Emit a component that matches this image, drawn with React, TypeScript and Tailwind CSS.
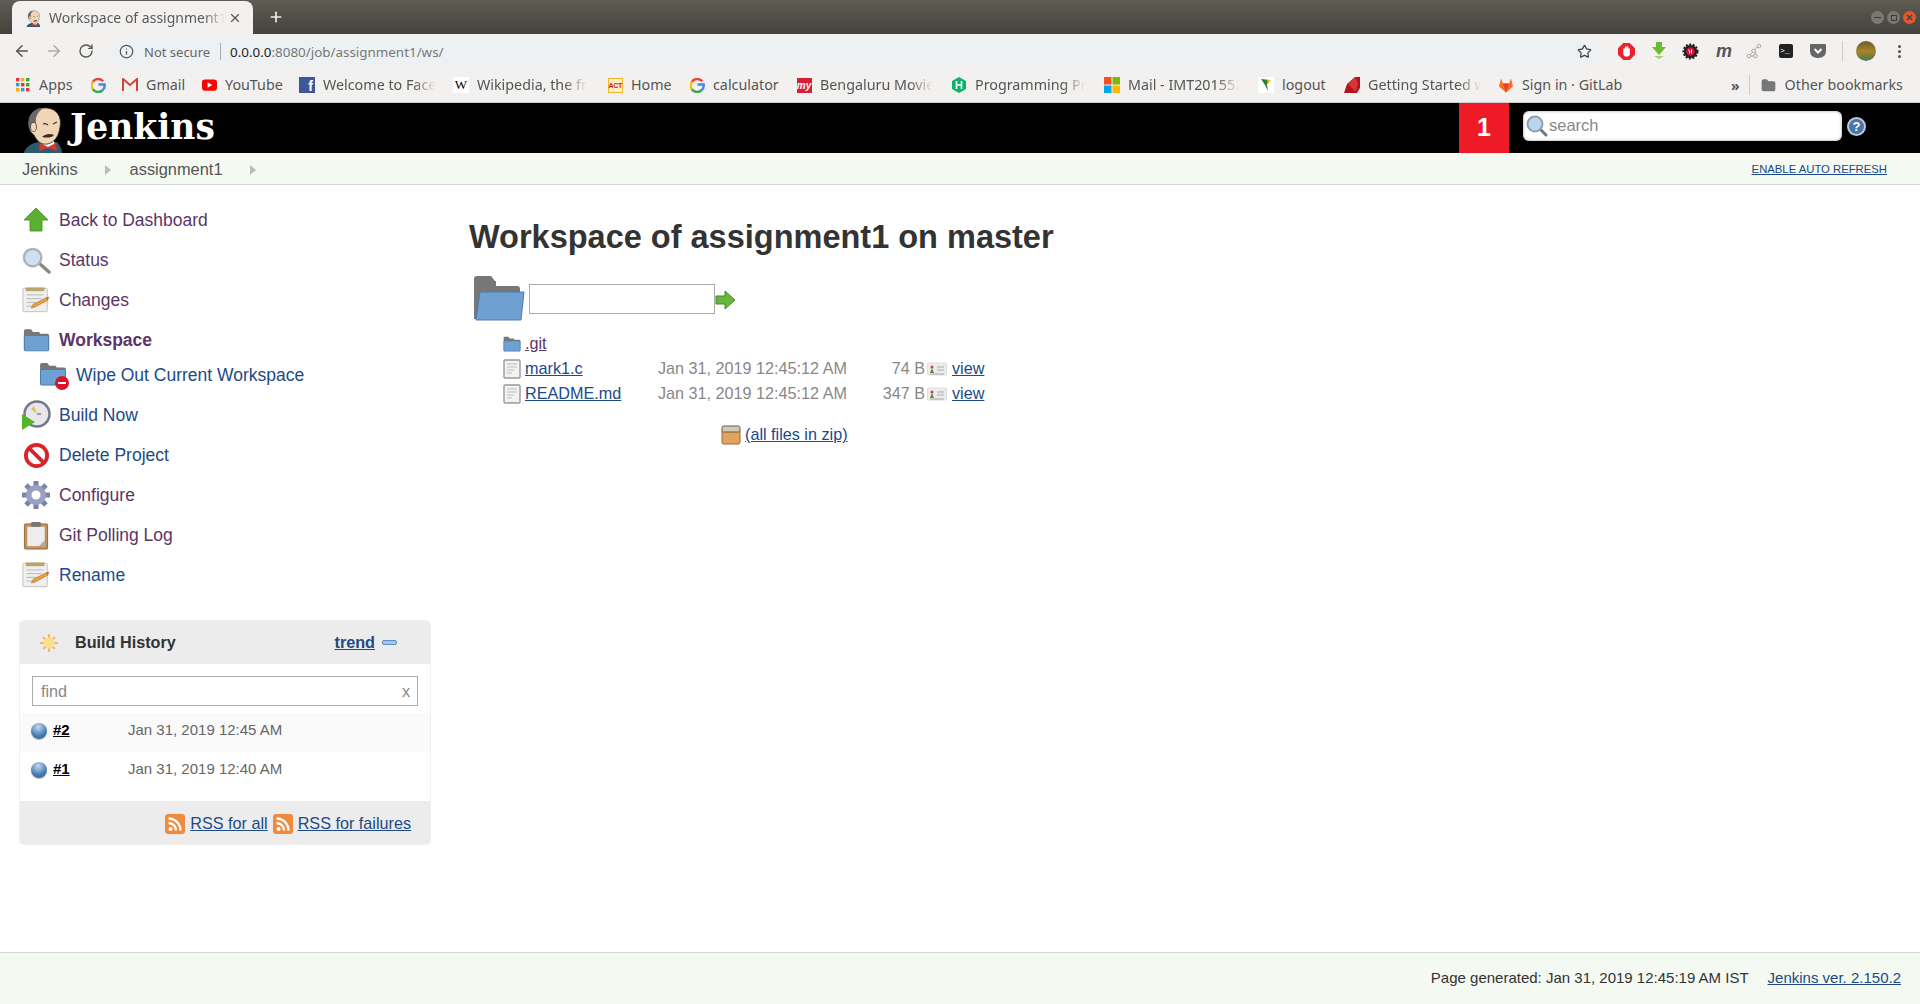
import { ArrowLeft, ArrowRight, RotateCw, Info, Star, X, Plus, Folder } from 'lucide-react'
import { ReactNode } from 'react'

const CHROME_FONT = 'font-["Noto_Sans",sans-serif]'

function Jenkins({ className }: { className: string }) {
  return (
    <svg viewBox="5 0 50 50" className={className}>
      <path d="M9 50c1-6 8-10 15-11h18c3 3 5 7 5 11z" fill="#2f5a6e" />
      <path d="M27 38l12 0 1 5-6 2-6-2z" fill="#f4f1ea" />
      <path d="M33 44l-8-4-1 8 9-3 9 3-1-8z" fill="#d33833" />
      <path d="M14 22C13 10 22 4 32 5c10 1 15 9 13 19-1 8-5 16-13 17-6 1-10-3-13-9-3-2-5-5-5-10z" fill="#f0d6b7" stroke="#3c2f26" strokeWidth=".8" />
      <path d="M14 25C11 12 20 4 29 5c-6 3-9 9-8 15l-3 6z" fill="#6a686a" />
      <ellipse cx="18.5" cy="24" rx="3" ry="4.5" fill="#f0d6b7" stroke="#3c2f26" strokeWidth=".7" />
      <path d="M27 34c3-3 8-4 12-2-2 3-8 3-12 2z" fill="#3c2f26" />
      <path d="M28 21c2-1 4 0 5 1M38 21l4-2" stroke="#3c2f26" strokeWidth="1.2" fill="none" />
    </svg>
  )
}

function Notepad() {
  return (
    <svg viewBox="0 0 30 28" className="w-[28px] h-[27px]">
      <rect x="1" y="1" width="26" height="25" rx="1" fill="#efefef" stroke="#bdbdbd" />
      <rect x="4" y="0" width="20" height="4" fill="#b7a66a" />
      <path d="M5 8h18M5 12h16M5 16h10M5 20h8" stroke="#b5b5b5" strokeWidth="1" />
      <path d="M10 22l2-4 14-7 2 2.5-14 7.5z" fill="#e8a13a" stroke="#a86b1d" strokeWidth=".6" />
      <path d="M26 11l3-1-1 3z" fill="#d33" />
    </svg>
  )
}

function FolderIcon({ className }: { className: string }) {
  return (
    <svg viewBox="0 0 30 26" className={className}>
      <path d="M1 3q0-2 2-2h6l2 3h7l1 2h8q2 0 2 2v16H1z" fill="#777" />
      <rect x="1.5" y="8" width="27" height="17" rx="1" fill="#6fa0d2" stroke="#4a7cb3" />
    </svg>
  )
}

function SidebarIcon({ name }: { name: string }) {
  if (name === 'up')
    return (
      <svg viewBox="0 0 28 26" className="w-[28px] h-[26px]">
        <path d="M14 1L26 13h-6v11H8V13H2z" fill="#5cb030" stroke="#3f8a1e" strokeWidth=".8" />
      </svg>
    )
  if (name === 'search')
    return (
      <svg viewBox="0 0 30 28" className="w-[29px] h-[27px]">
        <path d="M18 17l10 9" stroke="#888" strokeWidth="3.5" strokeLinecap="round" />
        <circle cx="11" cy="11" r="9" fill="#cfe0f2" stroke="#aab2ba" strokeWidth="2.5" />
      </svg>
    )
  if (name === 'notepad') return <Notepad />
  if (name === 'folder') return <FolderIcon className="w-[27px] h-[24px]" />
  if (name === 'clock')
    return (
      <svg viewBox="0 0 30 30" className="w-[30px] h-[30px]">
        <circle cx="16" cy="14" r="12.5" fill="#e8e8ec" stroke="#76768a" strokeWidth="2.5" />
        <path d="M16 14l-6-5 3-3z" fill="#e3c44e" />
        <path d="M16 14l4 0" stroke="#555" strokeWidth="1" />
        <path d="M1 14l13 8-13 8z" fill="#55b52a" />
      </svg>
    )
  if (name === 'nope')
    return (
      <svg viewBox="0 0 28 28" className="w-[27px] h-[27px]">
        <circle cx="14" cy="14" r="11" fill="#fff" stroke="#d8242a" strokeWidth="4" />
        <path d="M6 6l16 16" stroke="#d8242a" strokeWidth="4" />
      </svg>
    )
  if (name === 'gear')
    return (
      <svg viewBox="0 0 30 30" className="w-[30px] h-[30px]">
        <g stroke="#7c82a8" strokeWidth="5">
          <path d="M15 1v28M1 15h28M5 5l20 20M25 5L5 25" />
        </g>
        <circle cx="15" cy="15" r="10" fill="#9a9fc4" />
        <circle cx="15" cy="15" r="4.5" fill="#fff" />
      </svg>
    )
  return (
    <svg viewBox="0 0 26 30" className="w-[26px] h-[29px]">
      <rect x="1" y="3" width="24" height="26" rx="1" fill="#c0935c" stroke="#94693a" />
      <rect x="4" y="6" width="18" height="20" fill="#ededed" />
      <rect x="8" y="1" width="10" height="5" rx="1" fill="#777" />
      <path d="M16 26l6-6v6z" fill="#aaa" />
    </svg>
  )
}

function MiniDoc() {
  return (
    <svg viewBox="0 0 18 20" className="w-[18px] h-[20px] shrink-0">
      <rect x="1" y="1" width="16" height="18" rx="1" fill="#f2f2f2" stroke="#999" strokeWidth="1.4" />
      <path d="M4 5h10M4 8h10M4 11h7M4 14h5" stroke="#bbb" />
    </svg>
  )
}

function ViewIcon() {
  return (
    <svg viewBox="0 0 20 14" className="w-[20px] h-[14px] shrink-0">
      <rect x=".5" y="1" width="19" height="12" rx="1" fill="#ececec" stroke="#ddd" />
      <path d="M3 11l2-5 2 5z" fill="#7c7a3a" />
      <circle cx="5" cy="5" r="1.5" fill="#b5522b" />
      <path d="M10 5h7M10 8h7M3 12h14" stroke="#aaa" />
    </svg>
  )
}

function Ball() {
  return <span className="w-[16px] h-[16px] rounded-full bg-[radial-gradient(circle_at_45%_25%,#c5d9ec,#4d82b8_55%,#24527f)] shadow-[0_1px_1px_#bbb] shrink-0" />
}

function Rss() {
  return (
    <svg viewBox="0 0 20 20" className="w-[20px] h-[20px] shrink-0">
      <rect width="20" height="20" rx="3" fill="#f08a3c" />
      <circle cx="5.5" cy="15" r="2" fill="#fff" />
      <path d="M3.5 9a7.5 7.5 0 0 1 7.5 7.5M3.5 4.5a12 12 0 0 1 12 12" stroke="#fff" strokeWidth="2.4" fill="none" />
    </svg>
  )
}

function GoogleG() {
  return (
    <svg viewBox="0 0 16 16" className="w-[15px] h-[15px]">
      <path d="M13 3.5A7 7 0 0 0 2 4" fill="none" stroke="#ea4335" strokeWidth="2.6" />
      <path d="M2 4a7 7 0 0 0 0 8" fill="none" stroke="#fbbc05" strokeWidth="2.6" />
      <path d="M2 12a7 7 0 0 0 10 1.4" fill="none" stroke="#34a853" strokeWidth="2.6" />
      <path d="M12 13.4A7 7 0 0 0 14.6 7H8" fill="none" stroke="#4285f4" strokeWidth="2.6" />
    </svg>
  )
}

const bookmarks: { w: string; label?: string; fade?: boolean; icon: ReactNode; tw?: string }[] = [
  {
    w: 'w-[75px]',
    label: 'Apps',
    icon: (
      <svg viewBox="0 0 14 14" className="w-[14px] h-[14px]">
        {['#e33', '#fa0', '#3a3', '#39e', '#e33', '#3a3', '#fa0', '#39e', '#e33'].map((c, i) => (
          <rect key={i} x={(i % 3) * 5} y={Math.floor(i / 3) * 5} width="3.4" height="3.4" fill={c} />
        ))}
      </svg>
    ),
  },
  { w: 'w-[32px]', icon: <GoogleG /> },
  {
    w: 'w-[79px]',
    label: 'Gmail',
    icon: (
      <svg viewBox="0 0 16 14" className="w-[16px] h-[14px]">
        <path d="M1 13V1l7 6 7-6v12" fill="none" stroke="#d0453a" strokeWidth="2" />
      </svg>
    ),
  },
  {
    w: 'w-[98px]',
    label: 'YouTube',
    icon: (
      <svg viewBox="0 0 16 12" className="w-[15px] h-[12px]">
        <rect width="16" height="12" rx="3" fill="#f00" />
        <path d="M6 3l5 3-5 3z" fill="#fff" />
      </svg>
    ),
  },
  {
    w: 'w-[154px]',
    label: 'Welcome to Face',
    fade: true,
    tw: 'w-[113px]',
    icon: (
      <span className="w-[16px] h-[16px] bg-[#3b5998] text-white font-bold text-[14px] leading-[18px] flex justify-end pr-[2px] font-['Liberation_Sans',sans-serif]">f</span>
    ),
  },
  {
    w: 'w-[154px]',
    label: 'Wikipedia, the fr',
    fade: true,
    tw: 'w-[110px]',
    icon: <span className="w-[16px] h-[16px] bg-white text-black text-[13px] leading-[16px] text-center font-['Liberation_Serif',serif]">W</span>,
  },
  {
    w: 'w-[82px]',
    label: 'Home',
    icon: <span className="w-[15px] h-[15px] bg-[#fdf0c0] border border-[#f0b429] text-[#d2142a] font-bold text-[7px] leading-[13px] text-center tracking-tighter font-['Liberation_Sans',sans-serif]">ACT</span>,
  },
  { w: 'w-[107px]', label: 'calculator', icon: <GoogleG /> },
  {
    w: 'w-[155px]',
    label: 'Bengaluru Movie',
    fade: true,
    tw: 'w-[113px]',
    icon: <span className="w-[15px] h-[15px] bg-[#d81e34] text-white italic font-bold text-[10px] leading-[15px] text-center font-['Liberation_Sans',sans-serif]">my</span>,
  },
  {
    w: 'w-[153px]',
    label: 'Programming Pr',
    fade: true,
    tw: 'w-[110px]',
    icon: (
      <svg viewBox="0 0 14 16" className="w-[14px] h-[16px]">
        <path d="M7 0l7 4v8l-7 4-7-4V4z" fill="#0cb46b" />
        <path d="M4.5 4v8M9.5 4v8M4.5 8h5" stroke="#fff" strokeWidth="1.6" />
      </svg>
    ),
  },
  {
    w: 'w-[154px]',
    label: 'Mail - IMT201552',
    fade: true,
    tw: 'w-[111px]',
    icon: (
      <svg viewBox="0 0 16 16" className="w-[16px] h-[16px]">
        <rect width="7.5" height="7.5" fill="#f25022" />
        <rect x="8.5" width="7.5" height="7.5" fill="#7fba00" />
        <rect y="8.5" width="7.5" height="7.5" fill="#00a4ef" />
        <rect x="8.5" y="8.5" width="7.5" height="7.5" fill="#ffb900" />
      </svg>
    ),
  },
  {
    w: 'w-[86px]',
    label: 'logout',
    icon: (
      <svg viewBox="0 0 16 16" className="w-[16px] h-[16px]">
        <rect width="16" height="16" fill="#fff" />
        <path d="M3 2l9 1-3 4 1 7-3-6z" fill="#2f7d32" />
        <path d="M9 3l4 0-3 4z" fill="#e8c21e" />
      </svg>
    ),
  },
  {
    w: 'w-[154px]',
    label: 'Getting Started w',
    fade: true,
    tw: 'w-[113px]',
    icon: (
      <svg viewBox="0 0 16 16" className="w-[16px] h-[16px]">
        <path d="M11 0h5v11l-3 5H0l3-9z" fill="#b3141c" />
        <path d="M11 0L4 7l8 8 2-9z" fill="#d9343a" />
      </svg>
    ),
  },
  {
    w: 'w-[233px]',
    label: 'Sign in · GitLab',
    icon: (
      <svg viewBox="0 0 16 15" className="w-[17px] h-[16px]">
        <path d="M8 15L1 9l2-8 2 5h6l2-5 2 8z" fill="#fc6d26" />
        <path d="M8 15L5 6h6z" fill="#e24329" />
      </svg>
    ),
  },
]

function BrowserChrome() {
  return (
    <div className={`${CHROME_FONT} text-[#5a5a5a] shrink-0`}>
      {/* tab strip */}
      <div className="h-[34px] bg-gradient-to-b from-[#5f5c54] to-[#44423c] flex items-end pl-[12px]">
        <div className="w-[241px] h-[33px] bg-[#f2f1f0] rounded-t-[8px] flex items-center pl-[13px] pr-[10px]">
          <Jenkins className="w-[18px] h-[18px] shrink-0" />
          <span className="ml-[6px] w-[176px] overflow-hidden whitespace-nowrap text-[14px] [mask-image:linear-gradient(to_right,black_88%,transparent)]">
            Workspace of assignment1
          </span>
          <X className="w-[14px] h-[14px] ml-[3px] text-[#555] shrink-0" />
        </div>
        <Plus className="w-[16px] h-[16px] ml-[15px] mb-[9px] text-[#eee]" strokeWidth={2.5} />
        <div className="ml-auto flex items-center gap-[3px] pr-[4px] mb-[10px]">
          <span className="w-[13px] h-[13px] rounded-full bg-[#7a7870] flex items-center justify-center">
            <span className="w-[7px] h-[1px] bg-[#3c3b37]" />
          </span>
          <span className="w-[13px] h-[13px] rounded-full bg-[#7a7870] flex items-center justify-center">
            <span className="w-[6px] h-[6px] border border-[#3c3b37]" />
          </span>
          <span className="w-[13px] h-[13px] rounded-full bg-[#e4572e] flex items-center justify-center">
            <X className="w-[9px] h-[9px] text-[#3c3b37]" strokeWidth={3} />
          </span>
        </div>
      </div>

      {/* toolbar */}
      <div className="h-[34px] bg-[#f2f1f0] flex items-center pl-[13px]">
        <ArrowLeft className="w-[18px] h-[18px] text-[#555]" />
        <ArrowRight className="w-[18px] h-[18px] ml-[14px] text-[#aaa]" />
        <RotateCw className="w-[16px] h-[16px] ml-[15px] text-[#555]" />
        <div className="ml-[14px] w-[1494px] h-[28px] bg-[#eef1f3] rounded-full flex items-center pl-[11px]">
          <Info className="w-[15px] h-[15px] text-[#555]" />
          <span className="ml-[10px] pt-[3px] text-[13px] text-[#666]">Not secure</span>
          <span className="ml-[10px] w-px h-[17px] bg-[#aaa]" />
          <span className="ml-[9px] pt-[3px] text-[13.4px] text-[#777]">
            <span className="text-[#222]">0.0.0.0</span>:8080/job/assignment1/ws/
          </span>
          <Star className="w-[15px] h-[15px] ml-auto mr-[10px] text-[#444]" />
        </div>
        <div className="flex items-center ml-[16px]">
          {/* adblock */}
          <svg viewBox="0 0 16 16" className="w-[17px] h-[17px]">
            <path d="M5 0h6l5 5v6l-5 5H5l-5-5V5z" fill="#e8242f" />
            <path d="M5 11V6q0-1 .8-1t.8 1V4q0-1 .8-1t.8 1v0q0-1 .8-1t.8 1v2q0-1 .7-1t.7 1v5q-1 2-3 2t-3.2-2z" fill="#fff" />
          </svg>
          <svg viewBox="0 0 16 18" className="w-[16px] h-[18px] ml-[16px]">
            <path d="M5 0h6v5h4l-7 8-7-8h4z" fill="#6dbb2e" />
            <path d="M3 14h10l-5 3z" fill="#a5d46a" />
          </svg>
          <svg viewBox="0 0 18 18" className="w-[17px] h-[17px] ml-[15px]">
            <circle cx="9" cy="9" r="7" fill="#222" stroke="#222" strokeWidth="3" strokeDasharray="2 1.5" />
            <circle cx="9" cy="9" r="4.5" fill="#d8133a" />
            <path d="M7 7l1 2v2M10 7v4" stroke="#fff" strokeWidth="1" fill="none" />
          </svg>
          <span className="ml-[17px] w-[15px] text-[18px] italic font-bold text-[#555] leading-none font-['Liberation_Sans',sans-serif]">m</span>
          <svg viewBox="0 0 16 16" className="w-[16px] h-[16px] ml-[15px]">
            <path d="M3 13L7 9l3-4 3-2M3 13h5l2-4" fill="none" stroke="#aaa" />
            <circle cx="13" cy="3" r="1.8" fill="#f2f1f0" stroke="#aaa" />
            <circle cx="7.5" cy="8" r="1.8" fill="#f2f1f0" stroke="#aaa" />
            <circle cx="3" cy="13" r="1.8" fill="#f2f1f0" stroke="#aaa" />
            <circle cx="9.5" cy="13" r="1.8" fill="#f2f1f0" stroke="#aaa" />
          </svg>
          <span className="ml-[17px] w-[14px] h-[14px] rounded-[2px] bg-[#222] text-white text-[8px] leading-[14px] pl-[1px] font-['Liberation_Mono',monospace]">&gt;_</span>
          <svg viewBox="0 0 16 14" className="w-[16px] h-[14px] ml-[17px]">
            <path d="M0 1q0-1 1-1h14q1 0 1 1v6q0 7-8 7T0 7z" fill="#666" />
            <path d="M4.5 5L8 8.5 11.5 5" stroke="#fff" strokeWidth="2" fill="none" />
          </svg>
          <span className="ml-[16px] w-px h-[20px] bg-[#ccc]" />
          <span className="ml-[13px] w-[20px] h-[20px] rounded-full bg-[linear-gradient(#6b5a2c,#a8842c_50%,#6a7a3a_85%,#3d8a8a)]" />
          <span className="ml-[22px] flex flex-col gap-[2px]">
            <span className="w-[3px] h-[3px] bg-[#555] rounded-full" />
            <span className="w-[3px] h-[3px] bg-[#555] rounded-full" />
            <span className="w-[3px] h-[3px] bg-[#555] rounded-full" />
          </span>
        </div>
      </div>

      {/* bookmarks bar */}
      <div className="h-[35px] bg-[#f2f1f0] border-b border-[#cfcfcf] flex items-center pl-[15px] text-[14.3px] text-[#555]">
        {bookmarks.map((b, i) => (
          <div key={i} className={`${b.w} flex items-center shrink-0`}>
            <span className="w-[16px] mr-[8px] flex justify-center shrink-0">{b.icon}</span>
            {b.label && (
              <span className={`${b.tw ?? ''} overflow-hidden whitespace-nowrap ${b.fade ? '[mask-image:linear-gradient(to_right,black_80%,transparent)]' : ''}`}>
                {b.label}
              </span>
            )}
          </div>
        ))}
        <span className="text-[14px] font-bold">»</span>
        <span className="ml-[9px] w-px h-[20px] bg-[#ccc]" />
        <Folder className="w-[15px] h-[15px] ml-[11px] text-[#777] fill-[#777]" />
        <span className="ml-[9px] whitespace-nowrap">Other bookmarks</span>
      </div>
    </div>
  )
}

function PageHeader() {
  return (
    <div className="h-[50px] bg-black flex items-end pl-[20px] shrink-0">
      <Jenkins className="w-[50px] h-[50px]" />
      <span className="self-center mb-[2px] text-white font-bold text-[34.5px] leading-none font-['DejaVu_Serif',serif]">Jenkins</span>
      <div className="ml-auto flex items-stretch self-stretch">
        <div className="w-[50px] bg-[#ee1b26] text-white font-bold text-[25px] flex items-center justify-center">1</div>
        <div className="ml-[14px] mt-[8px] mb-[12px] w-[319px] bg-white rounded-[6px] flex items-center pl-[3px] shadow-[inset_0_0_3px_#999]">
          <svg viewBox="0 0 22 22" className="w-[22px] h-[22px]">
            <path d="M14 14l6 6" stroke="#777" strokeWidth="3" strokeLinecap="round" />
            <circle cx="9" cy="9" r="7.5" fill="#bcd6ee" stroke="#8fa0ae" strokeWidth="2" />
          </svg>
          <span className="ml-[1px] pb-[1px] text-[16.5px] text-[#888]">search</span>
        </div>
        <div className="ml-[5px] mr-[54px] mb-[3px] self-center w-[19px] h-[19px] rounded-full bg-[#4a75a8] border-2 border-[#b5cae0] text-white font-bold text-[13px] leading-[15px] text-center">?</div>
      </div>
    </div>
  )
}

function Breadcrumbs() {
  return (
    <div className="h-[32px] pt-[2px] bg-[#f4f9f2] border-b border-[#d3d7cf] flex items-center pl-[22px] text-[16.4px] text-[#555] shrink-0">
      <span>Jenkins</span>
      <span className="ml-[27px] w-0 h-0 border-y-[5px] border-y-transparent border-l-[6px] border-l-[#bbb]" />
      <span className="ml-[19px]">assignment1</span>
      <span className="ml-[27px] w-0 h-0 border-y-[5px] border-y-transparent border-l-[6px] border-l-[#bbb]" />
      <span className="ml-auto mr-[33px] text-[11.3px] text-[#204a87] underline">ENABLE AUTO REFRESH</span>
    </div>
  )
}

const tasks = [
  { icon: 'up', label: 'Back to Dashboard', color: 'text-[#5c3566]' },
  { icon: 'search', label: 'Status', color: 'text-[#5c3566]' },
  { icon: 'notepad', label: 'Changes', color: 'text-[#5c3566]' },
  { icon: 'folder', label: 'Workspace', color: 'text-[#5c3566] font-bold' },
  { icon: 'clock', label: 'Build Now', color: 'text-[#204a87]' },
  { icon: 'nope', label: 'Delete Project', color: 'text-[#204a87]' },
  { icon: 'gear', label: 'Configure', color: 'text-[#5c3566]' },
  { icon: 'log', label: 'Git Polling Log', color: 'text-[#5c3566]' },
  { icon: 'notepad', label: 'Rename', color: 'text-[#204a87]' },
]

function TaskRow({ icon, label, color }: { icon: string; label: string; color: string }) {
  return (
    <div className="h-[40px] flex items-center pl-[21px]">
      <span className="w-[30px] flex justify-center shrink-0">
        <SidebarIcon name={icon} />
      </span>
      <span className={`ml-[8px] text-[17.5px] ${color}`}>{label}</span>
    </div>
  )
}

function Sidebar() {
  return (
    <div className="w-[469px] shrink-0 pt-[15px]">
      {tasks.map((t) => (
        <div key={t.label}>
          <TaskRow {...t} />
          {t.label === 'Workspace' && (
            <div className="h-[35px] pb-[4px] flex items-center pl-[39px]">
              <span className="relative w-[30px] h-[28px] shrink-0">
                <FolderIcon className="w-[28px] h-[24px]" />
                <span className="absolute right-0 bottom-0 w-[14px] h-[14px] rounded-full bg-[#d8132a] flex items-center justify-center">
                  <span className="w-[8px] h-[2px] bg-white" />
                </span>
              </span>
              <span className="ml-[7px] text-[17.5px] text-[#204a87]">Wipe Out Current Workspace</span>
            </div>
          )}
        </div>
      ))}

      {/* build history */}
      <div className="mt-[25px] ml-[19px] w-[412px] h-[225px] rounded-[5px] border border-[#f0f0f0] overflow-hidden flex flex-col">
        <div className="h-[43px] bg-[#ececec] flex items-center pl-[20px] text-[16.2px] shrink-0">
          <svg viewBox="0 0 18 18" className="w-[18px] h-[18px]">
            <g stroke="#f5b66a" strokeWidth="2">
              <path d="M9 0v18M0 9h18M3 3l12 12M15 3L3 15" />
            </g>
            <circle cx="9" cy="9" r="5.5" fill="#fbe08a" />
          </svg>
          <span className="ml-[17px] font-bold text-[#333]">Build History</span>
          <span className="ml-auto font-bold text-[#204a87] underline">trend</span>
          <span className="ml-[7px] mr-[33px] w-[15px] h-[5px] rounded-[2px] bg-[#a8c4e4] border border-[#5f8ec4]" />
        </div>
        <div className="px-[12px] pt-[12px] pb-[7px]">
          <div className="h-[30px] border border-[#aaa] flex items-center justify-between pl-[8px] pr-[7px] text-[16.2px] text-[#888]">
            <span>find</span>
            <span>x</span>
          </div>
        </div>
        {[
          { n: '#2', d: 'Jan 31, 2019 12:45 AM', bg: 'bg-[#fafafa]' },
          { n: '#1', d: 'Jan 31, 2019 12:40 AM', bg: 'bg-white' },
        ].map((b) => (
          <div key={b.n} className={`h-[39px] ${b.bg} flex items-center pl-[11px] pb-[4px]`}>
            <Ball />
            <span className="ml-[6px] w-[75px] text-[15px] font-bold text-black underline">{b.n}</span>
            <span className="text-[15px] text-[#666]">{b.d}</span>
          </div>
        ))}
        <div className="flex-1 bg-[#ececec] mt-[10px] pt-[2px] flex items-center justify-end pr-[19px] text-[16.2px] text-[#204a87]">
          <Rss />
          <span className="ml-[5px] underline">RSS for all</span>
          <span className="ml-[5px]">
            <Rss />
          </span>
          <span className="ml-[5px] underline">RSS for failures</span>
        </div>
      </div>
    </div>
  )
}

const files = [
  { name: 'mark1.c', size: '74 B' },
  { name: 'README.md', size: '347 B' },
]

function Workspace() {
  return (
    <div className="flex-1 pt-[33px]">
      <h1 className="text-[32.5px] leading-[38px] font-bold text-[#333]">Workspace of assignment1 on master</h1>

      <div className="mt-[19px] flex items-center pl-[3px]">
        <svg viewBox="0 0 54 48" className="w-[54px] h-[48px]">
          <path d="M2 4q0-3 3-3h14l4 5h1v5h21q3 0 3 3v30H2z" fill="#777" />
          <path d="M8 17h44l-3 28H4z" fill="#6fa0d2" stroke="#4a7cb3" />
        </svg>
        <div className="ml-[3px] w-[186px] h-[30px] border border-[#aaa] bg-white" />
        <svg viewBox="0 0 21 20" className="w-[21px] h-[20px] mt-[2px]">
          <path d="M1 6h9V1l10 9-10 9v-5H1z" fill="#6ab53f" stroke="#3f8a1e" />
        </svg>
      </div>

      <div className="mt-[8px] pl-[34px] text-[16.2px]">
        <div className="h-[25px] flex items-center">
          <span className="w-[22px] shrink-0">
            <FolderIcon className="w-[18px] h-[16px]" />
          </span>
          <span className="text-[#5c3566] underline">.git</span>
        </div>
        {files.map((f) => (
          <div key={f.name} className="h-[25px] flex items-center">
            <span className="w-[22px] shrink-0">
              <MiniDoc />
            </span>
            <span className="w-[133px] text-[#204a87] underline">{f.name}</span>
            <span className="w-[190px] text-[#888]">Jan 31, 2019 12:45:12 AM</span>
            <span className="w-[77px] text-right text-[#888]">{f.size}</span>
            <span className="ml-[2px]">
              <ViewIcon />
            </span>
            <span className="ml-[5px] text-[#204a87] underline">view</span>
          </div>
        ))}
        <div className="mt-[16px] ml-[218px] flex items-center text-[#204a87] h-[25px]">
          <svg viewBox="0 0 20 20" className="w-[20px] h-[20px]">
            <rect x="1" y="5" width="18" height="14" rx="1.5" fill="#e0a45e" stroke="#9a6a2c" />
            <rect x="1" y="1" width="18" height="6" rx="1.5" fill="#cfcab8" stroke="#6f5a3a" />
          </svg>
          <span className="ml-[4px] underline">(all files in zip)</span>
        </div>
      </div>
    </div>
  )
}

export default function App() {
  return (
    <div className="h-[1004px] w-[1920px] flex flex-col overflow-hidden bg-white font-['Liberation_Sans',sans-serif] text-[#333]">
      <BrowserChrome />
      <PageHeader />
      <Breadcrumbs />
      <div className="flex-1 flex min-h-0">
        <Sidebar />
        <Workspace />
      </div>
      <div className="h-[52px] bg-[#f4f9f2] border-t border-[#d3d7cf] flex items-center justify-end pr-[19px] text-[15px] text-[#333] shrink-0">
        <span>Page generated: Jan 31, 2019 12:45:19 AM IST</span>
        <span className="ml-[19px] text-[#204a87] underline">Jenkins ver. 2.150.2</span>
      </div>
    </div>
  )
}
